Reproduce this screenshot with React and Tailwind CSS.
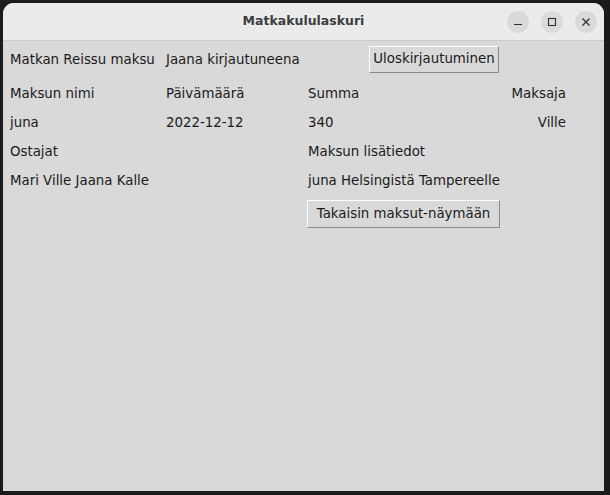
export default function App() {
  const font = { fontFamily: '"DejaVu Sans", sans-serif' };
  return (
    <div className="w-[610px] h-[495px] bg-[#1b1b1b] pt-[3px] pl-[3px]" style={font}>
      <div className="w-[601px] h-[488px] rounded-t-[11px] overflow-hidden bg-[#d9d9d9] flex flex-col">
        {/* Title bar */}
        <div className="relative h-[38px] bg-[#ebebeb] border-b border-[#c9c9c9] flex items-center justify-center shrink-0">
          <span className="text-[12.5px] font-bold text-[#3d3d3d]">Matkakululaskuri</span>
          <div className="absolute right-[7px] top-[8px] flex gap-[12px]">
            <div className="w-[22px] h-[22px] rounded-full bg-[#dadada] flex items-center justify-center">
              <svg width="10" height="10" viewBox="0 0 10 10">
                <path d="M1 7.5h8" stroke="#2e2e2e" strokeWidth="1.2" />
              </svg>
            </div>
            <div className="w-[22px] h-[22px] rounded-full bg-[#dadada] flex items-center justify-center">
              <svg width="10" height="10" viewBox="0 0 10 10">
                <rect x="1.5" y="1.5" width="7" height="7" fill="none" stroke="#2e2e2e" strokeWidth="1.1" />
              </svg>
            </div>
            <div className="w-[22px] h-[22px] rounded-full bg-[#dadada] flex items-center justify-center">
              <svg width="10" height="10" viewBox="0 0 10 10">
                <path d="M1.5 1.5l7 7M8.5 1.5l-7 7" stroke="#2e2e2e" strokeWidth="1.2" />
              </svg>
            </div>
          </div>
        </div>

        {/* Content */}
        <div className="pl-[7px] pt-[5px] text-[13.35px] text-[#1a1a1a]">
          <div className="grid grid-cols-[156px_142px_203px_55px] h-[27px] items-center">
            <span className="whitespace-nowrap pt-[2px]">Matkan Reissu maksu</span>
            <span className="whitespace-nowrap pt-[2px]">Jaana kirjautuneena</span>
            <div className="pl-[61px]">
              <button className="w-[130px] h-[27px] bg-[#d9d9d9] border border-t-white border-l-white border-b-[#8a8a8a] border-r-[#8a8a8a] text-[13.35px] text-[#1a1a1a] whitespace-nowrap">
                Uloskirjautuminen
              </button>
            </div>
            <span></span>
          </div>

          <div className="grid grid-cols-[156px_142px_203px_55px] auto-rows-[29px] items-center mt-[7px]">
            <span>Maksun nimi</span>
            <span>Päivämäärä</span>
            <span>Summa</span>
            <span className="text-right">Maksaja</span>

            <span>juna</span>
            <span>2022-12-12</span>
            <span>340</span>
            <span className="text-right">Ville</span>

            <span>Ostajat</span>
            <span></span>
            <span>Maksun lisätiedot</span>
            <span></span>

            <span className="whitespace-nowrap">Mari Ville Jaana Kalle</span>
            <span></span>
            <span className="whitespace-nowrap">juna Helsingistä Tampereelle</span>
            <span></span>
          </div>

          <div className="grid grid-cols-[156px_142px_203px_55px] mt-[4px]">
            <span></span>
            <span></span>
            <div className="-ml-[1px]">
              <button className="w-[193px] h-[28px] bg-[#d9d9d9] border border-t-white border-l-white border-b-[#8a8a8a] border-r-[#8a8a8a] text-[13.35px] text-[#1a1a1a] whitespace-nowrap">
                Takaisin maksut-näymään
              </button>
            </div>
          </div>
        </div>
      </div>
    </div>
  );
}
